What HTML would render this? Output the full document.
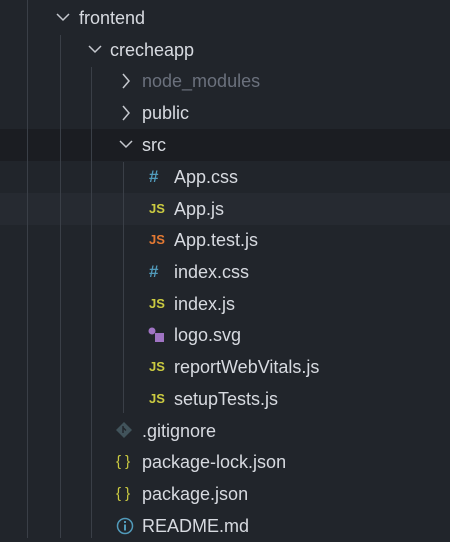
<!DOCTYPE html>
<html><head><style>
body{margin:0;width:450px;height:538px;background:#21252b;overflow:hidden;position:relative;font-family:"Liberation Sans",sans-serif;}
.row{position:absolute;left:0;width:450px;height:32px;}
.t{position:absolute;top:6px;font-size:18px;color:#d7dae0;line-height:20px;white-space:nowrap;}
.g{position:absolute;width:1px;background:#3a3f47;}
.ic{position:absolute;top:7px;font-size:13px;font-weight:bold;line-height:18px;}
svg{position:absolute;}
</style></head><body>
<div class="row" style="top:129px;background:#1b1d22"></div>
<div class="row" style="top:193px;background:#262a31"></div>
<div class="g" style="left:27px;top:0;height:538px"></div>
<div class="g" style="left:60px;top:35px;height:503px"></div>
<div class="g" style="left:91px;top:67px;height:471px"></div>
<div class="g" style="left:123px;top:162px;height:251px"></div>

<div class="row" style="top:2px"><svg style="left:56px;top:10px" width="14" height="10"><path d="M1 2 L7 8 L13 2" stroke="#c5c8ce" stroke-width="1.5" fill="none"/></svg><span class="t" style="left:79px">frontend</span></div>
<div class="row" style="top:34px"><svg style="left:88px;top:10px" width="14" height="10"><path d="M1 2 L7 8 L13 2" stroke="#c5c8ce" stroke-width="1.5" fill="none"/></svg><span class="t" style="left:110px">crecheapp</span></div>
<div class="row" style="top:65px"><svg style="left:121px;top:8px" width="10" height="16"><path d="M2 1 L8 8 L2 15" stroke="#c5c8ce" stroke-width="1.5" fill="none"/></svg><span class="t" style="left:142px;color:#6b717d">node_modules</span></div>
<div class="row" style="top:97px"><svg style="left:121px;top:8px" width="10" height="16"><path d="M2 1 L8 8 L2 15" stroke="#c5c8ce" stroke-width="1.5" fill="none"/></svg><span class="t" style="left:142px">public</span></div>
<div class="row" style="top:129px"><svg style="left:119px;top:10px" width="14" height="10"><path d="M1 2 L7 8 L13 2" stroke="#c5c8ce" stroke-width="1.5" fill="none"/></svg><span class="t" style="left:142px">src</span></div>

<div class="row" style="top:161px"><span class="ic" style="left:149px;color:#519aba;font-size:17px">#</span><span class="t" style="left:174px">App.css</span></div>
<div class="row" style="top:193px"><span class="ic" style="left:149px;color:#cbcb41">JS</span><span class="t" style="left:174px">App.js</span></div>
<div class="row" style="top:224px"><span class="ic" style="left:149px;color:#e37933">JS</span><span class="t" style="left:174px">App.test.js</span></div>
<div class="row" style="top:256px"><span class="ic" style="left:149px;color:#519aba;font-size:17px">#</span><span class="t" style="left:174px">index.css</span></div>
<div class="row" style="top:288px"><span class="ic" style="left:149px;color:#cbcb41">JS</span><span class="t" style="left:174px">index.js</span></div>
<div class="row" style="top:319px"><svg style="left:148px;top:8px" width="18" height="16"><circle cx="4" cy="4" r="3.5" fill="#a074c4"/><rect x="7" y="6" width="9" height="9" fill="#a074c4"/></svg><span class="t" style="left:174px">logo.svg</span></div>
<div class="row" style="top:351px"><span class="ic" style="left:149px;color:#cbcb41">JS</span><span class="t" style="left:174px">reportWebVitals.js</span></div>
<div class="row" style="top:383px"><span class="ic" style="left:149px;color:#cbcb41">JS</span><span class="t" style="left:174px">setupTests.js</span></div>

<div class="row" style="top:415px"><svg style="left:115px;top:6px" width="18" height="18"><path d="M9 1 L17 9 L9 17 L1 9Z" fill="#41535b"/><path d="M8 5 L8 12 M8 6.5 L11 9.5" stroke="#21252b" stroke-width="1.4" fill="none"/></svg><span class="t" style="left:142px">.gitignore</span></div>
<div class="row" style="top:446px"><span class="ic" style="left:116px;color:#cbcb41;font-size:15px;font-weight:normal">{ }</span><span class="t" style="left:142px">package-lock.json</span></div>
<div class="row" style="top:478px"><span class="ic" style="left:116px;color:#cbcb41;font-size:15px;font-weight:normal">{ }</span><span class="t" style="left:142px">package.json</span></div>
<div class="row" style="top:510px"><svg style="left:116px;top:7px" width="18" height="18"><circle cx="9" cy="9" r="7.5" stroke="#519aba" stroke-width="1.5" fill="none"/><rect x="8" y="7.5" width="2" height="6" fill="#519aba"/><rect x="8" y="4" width="2" height="2" fill="#519aba"/></svg><span class="t" style="left:142px">README.md</span></div>
</body></html>
